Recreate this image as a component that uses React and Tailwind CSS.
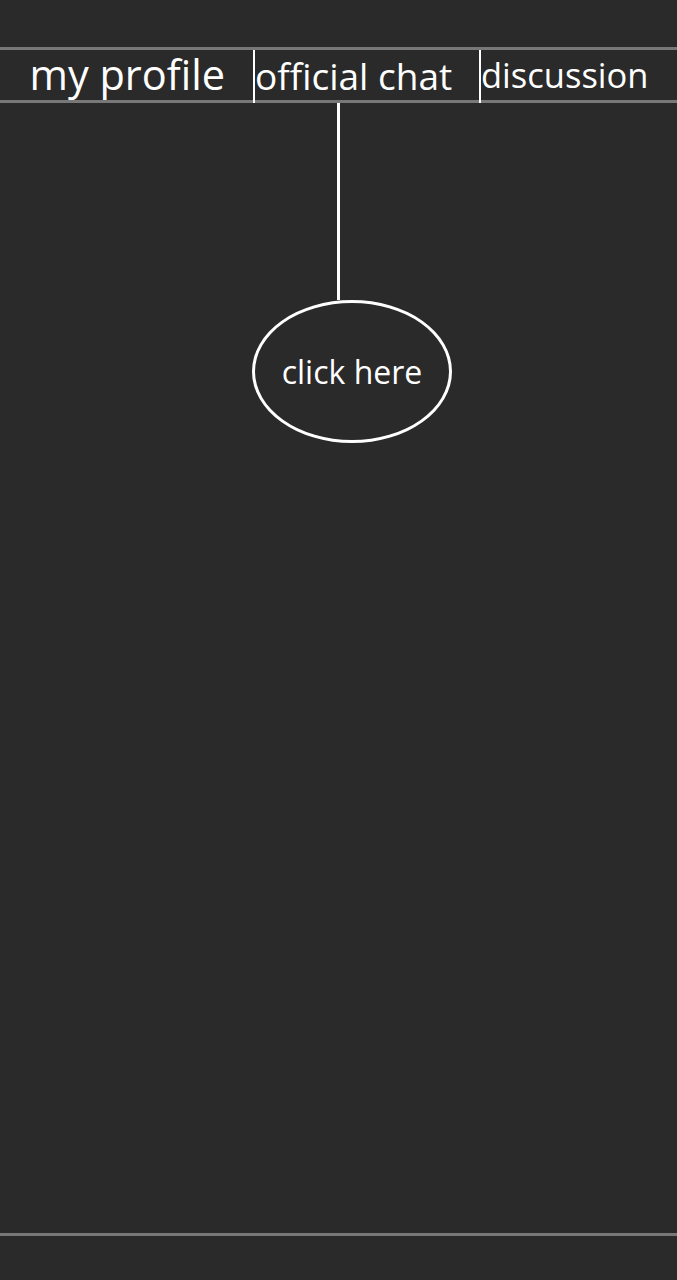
export default function App() {
  return (
    <div
      className="h-[1280px] w-[677px] bg-[#2a2a2a] text-white flex flex-col overflow-hidden"
      style={{ fontFamily: '"Open Sans", sans-serif' }}
    >
      <div className="h-[47px]" />
      <div className="h-[56px] flex border-t-[3px] border-b-[3px] border-[#787878]">
        <div className="w-[253px] flex items-center justify-end pr-[28px] text-[41.5px] leading-none pb-[1px]">
          my profile
        </div>
        <div className="w-[226px] flex items-center border-l-[2px] border-white text-[37px] leading-none pb-[2px] -mb-[3px]">
          official chat
        </div>
        <div className="flex-1 flex items-center border-l-[2px] border-white text-[34.5px] leading-none pb-[2px] -mb-[3px]">
          discussion
        </div>
      </div>
      <div className="ml-[337px] w-[3px] h-[197px] bg-white" />
      <div className="ml-[252px] w-[200px] h-[143px] rounded-[50%] border-[3px] border-white flex items-center justify-center text-[32px]">
        click here
      </div>
      <div className="flex-1" />
      <div className="h-[3px] bg-[#787878] mb-[44px]" />
    </div>
  );
}
